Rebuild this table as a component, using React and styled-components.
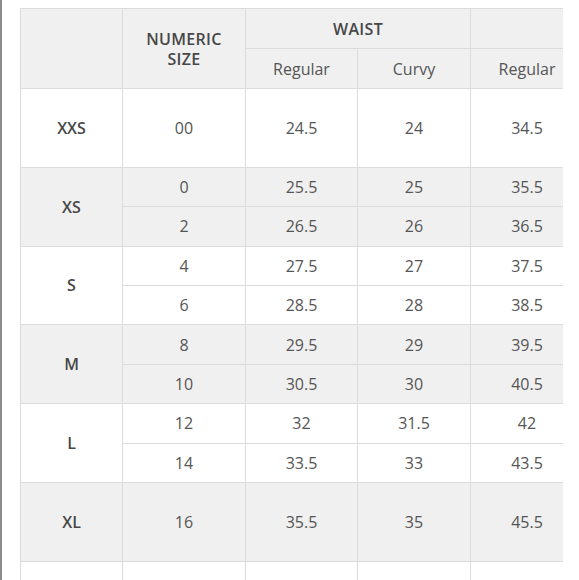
import React from 'react';
import styled, { createGlobalStyle } from 'styled-components';

const GlobalStyle = createGlobalStyle`
  html, body {
    margin: 0;
    padding: 0;
    background: #fff;
  }
  body {
    font-family: "Open Sans", "Noto Sans", sans-serif;
    color: #505050;
  }
`;

const sizes = [
  { size: 'XXS', rows: [['00', '24.5', '24', '34.5', '34']] },
  { size: 'XS', rows: [['0', '25.5', '25', '35.5', '35'], ['2', '26.5', '26', '36.5', '36']] },
  { size: 'S', rows: [['4', '27.5', '27', '37.5', '37'], ['6', '28.5', '28', '38.5', '38']] },
  { size: 'M', rows: [['8', '29.5', '29', '39.5', '39'], ['10', '30.5', '30', '40.5', '40']] },
  { size: 'L', rows: [['12', '32', '31.5', '42', '41.5'], ['14', '33.5', '33', '43.5', '43']] },
  { size: 'XL', rows: [['16', '35.5', '35', '45.5', '45']] },
  { size: 'XXL', rows: [['18', '37.5', '37', '47.5', '47']] },
];

const Page = () => (
  <Frame>
    <Scroller>
      <Table>
        <colgroup>
          <col style={{ width: 102 }} />
          <col style={{ width: 123 }} />
          <col style={{ width: 112 }} />
          <col style={{ width: 113 }} />
          <col style={{ width: 113 }} />
          <col style={{ width: 113 }} />
        </colgroup>
        <thead>
          <HeadRow>
            <HeadCell rowSpan={2} />
            <HeadCell rowSpan={2}>NUMERIC<br />SIZE</HeadCell>
            <HeadCell colSpan={2}>WAIST</HeadCell>
            <HeadCell colSpan={2}>HIPS</HeadCell>
          </HeadRow>
          <HeadRow>
            <SubHead>Regular</SubHead>
            <SubHead>Curvy</SubHead>
            <SubHead>Regular</SubHead>
            <SubHead>Curvy</SubHead>
          </HeadRow>
        </thead>
        <tbody>
          {sizes.map((group, gi) =>
            group.rows.map((row, ri) => (
              <Row key={group.size + ri} $shaded={gi % 2 === 1} $tall={group.rows.length === 1}>
                {ri === 0 && <SizeCell rowSpan={group.rows.length}>{group.size}</SizeCell>}
                {row.map((v, i) => (
                  <Cell key={i}>{v}</Cell>
                ))}
              </Row>
            ))
          )}
        </tbody>
      </Table>
    </Scroller>
  </Frame>
);

const Frame = styled.div`
  height: 580px;
  border-left: 2px solid #8c8c8c;
  box-sizing: border-box;
  padding: 8px 0 0 18px;
  overflow: hidden;
`;

const Scroller = styled.div`
  width: 543px;
  overflow: hidden;
`;

const Table = styled.table`
  border-collapse: collapse;
  table-layout: fixed;
  width: 676px;
  border: 1px solid #dcdcdc;
`;

const HeadRow = styled.tr`
  height: 40px;
  background: #f0f0f0;
`;

const HeadCell = styled.th`
  border: 1px solid #dcdcdc;
  font-size: 16px;
  font-weight: 600;
  letter-spacing: 0.3px;
  line-height: 20px;
  color: #474747;
  text-align: center;
  vertical-align: middle;
  padding: 0;
`;

const SubHead = styled.th`
  border: 1px solid #dcdcdc;
  font-size: 16px;
  font-weight: 400;
  color: #555;
  text-align: center;
  padding: 0;
`;

const Row = styled.tr`
  height: ${(p) => (p.$tall ? '78.8px' : '39.4px')};
  background: ${(p) => (p.$shaded ? '#f0f0f0' : '#fff')};
`;

const Cell = styled.td`
  border: 1px solid #dcdcdc;
  font-size: 16px;
  color: #555;
  text-align: center;
  vertical-align: middle;
  padding: 0;
`;

const SizeCell = styled(Cell)`
  font-weight: 600;
  color: #474747;
`;

export default function App() {
  return (
    <>
      <GlobalStyle />
      <Page />
    </>
  );
}
